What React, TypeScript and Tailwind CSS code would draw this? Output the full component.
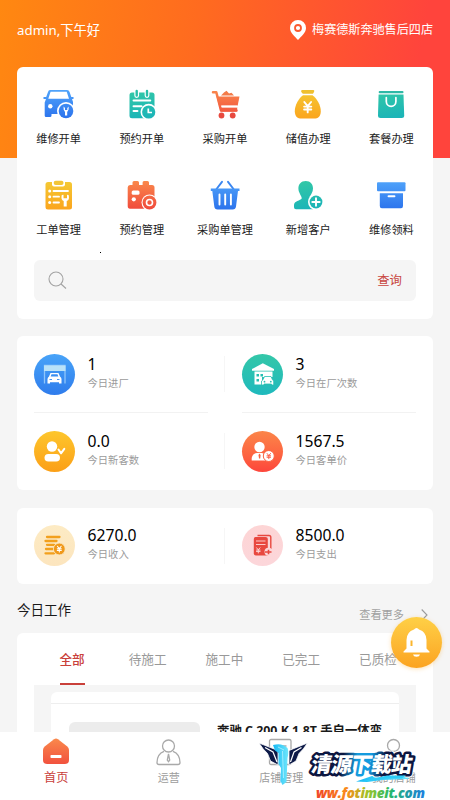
import { useState } from "react";
import type { ReactNode } from "react";

const Yen = ({ x, y, s = 1, color = "#fff" }: { x: number; y: number; s?: number; color?: string }) => (
  <g transform={`translate(${x} ${y}) scale(${s})`} stroke={color} strokeWidth="1.9" fill="none" strokeLinecap="round">
    <path d="M-3.4 -5 L0 -0.8 L3.4 -5 M0 -0.8 V5.4 M-3.6 -0.4 H3.6 M-3.6 2.5 H3.6" />
  </g>
);

const Gradients = () => (
  <svg width="0" height="0" className="absolute" aria-hidden="true">
    <defs>
      <linearGradient id="blue" x1="0" y1="0" x2="0" y2="30" gradientUnits="userSpaceOnUse">
        <stop stopColor="#51a5fb" />
        <stop offset="1" stopColor="#2b72ec" />
      </linearGradient>
      <linearGradient id="teal" x1="0" y1="0" x2="6" y2="30" gradientUnits="userSpaceOnUse">
        <stop stopColor="#35caa5" />
        <stop offset="1" stopColor="#1cb5b7" />
      </linearGradient>
      <linearGradient id="orange" x1="0" y1="0" x2="0" y2="30" gradientUnits="userSpaceOnUse">
        <stop stopColor="#fa8a4c" />
        <stop offset="1" stopColor="#f0493c" />
      </linearGradient>
      <linearGradient id="gold" x1="0" y1="0" x2="0" y2="30" gradientUnits="userSpaceOnUse">
        <stop stopColor="#f4cb35" />
        <stop offset="1" stopColor="#fba41d" />
      </linearGradient>
    </defs>
  </svg>
);

const actions: { label: string; icon: ReactNode }[] = [
  {
    label: "维修开单",
    icon: (
      <>
        <path
          fill="url(#blue)"
          fillRule="evenodd"
          d="M6 1H23Q25 1 25.6 3L27.3 8H29.5V10H28L29 13V25H7.5V26.5Q7.5 28 6 28H2Q.7 28 .7 26.5V13.5L2 10H-.5V8H2.2L4 3Q4.500 1 6 1ZM6.600 2.800L4.300 9.800H25L22.700 2.800Z"
        />
        <circle cx="6.300" cy="17.300" r="2.200" fill="#fff" />
        <circle cx="22" cy="22" r="9" fill="#fff" />
        <circle cx="22" cy="22" r="7.300" fill="url(#blue)" />
        <path d="M19.600 17.500V20.500L21 23V26.500H23.200V23L24.600 20.500V17.500L23.300 19V21H21V19Z" fill="#fff" />
      </>
    ),
  },
  {
    label: "预约开单",
    icon: (
      <>
        <rect x="2.500" y="3.500" width="25" height="25.800" rx="2.500" fill="url(#teal)" />
        <path d="M9.700 2.500V6.500M20 2.500V6.500" stroke="#fff" strokeWidth="4.800" strokeLinecap="round" />
        <path d="M9.700 2V6.500M20 2V6.500" stroke="#27bfa9" strokeWidth="2.400" strokeLinecap="round" />
        <path d="M6.500 11.500H23.300M6.500 17.300H14.500M6.500 22H10.500" stroke="#fff" strokeWidth="1.900" strokeLinecap="round" />
        <circle cx="21.700" cy="23" r="8.200" fill="#fff" />
        <circle cx="21.700" cy="23" r="6.600" fill="url(#teal)" />
        <path d="M21.300 19.500V23.500H25" stroke="#fff" strokeWidth="1.700" fill="none" />
      </>
    ),
  },
  {
    label: "采购开单",
    icon: (
      <>
        <path d="M3 3.300H6.300L11 21.500H26.500" stroke="url(#orange)" strokeWidth="2.500" fill="none" strokeLinecap="round" strokeLinejoin="round" />
        <path d="M6.500 7.500H29.500L27.700 16.500H9Z" fill="url(#orange)" />
        <path d="M11 6.500L14 3.500L16.500 1.700L19 4.500L21.500 3.700L24 6.500Z" fill="#f47b48" />
        <path d="M9.700 18.500H27.300L26.900 22.500H10.700Z" fill="url(#orange)" />
        <path d="M12 17.500H27" stroke="#fff" strokeWidth="1.600" />
        <circle cx="11.500" cy="26.500" r="2.900" fill="#e8493f" />
        <circle cx="22.700" cy="26.500" r="2.900" fill="#e8493f" />
      </>
    ),
  },
  {
    label: "储值办理",
    icon: (
      <>
        <path d="M9 1H20.500Q22 1.500 21 3L20 4.800H9.800L8.300 3Q7.500 1.500 9 1Z" fill="#efc02f" />
        <path d="M10 6.200H19.500C23.500 9 28 16 27.800 22.500C27.600 27.500 25 29.600 21 29.600H8.500C4.500 29.600 2 27.500 1.800 22.500C1.600 16 6 9 10 6.200Z" fill="url(#gold)" />
        <Yen x={14.7} y={18} />
      </>
    ),
  },
  {
    label: "套餐办理",
    icon: (
      <>
        <rect x="2.700" y="2" width="24.800" height="2.300" rx="1" fill="#2fb9a6" />
        <path d="M2.600 5.600H27.500L28.200 26.500Q28.200 29 25.700 29H4.500Q2 29 2 26.500Z" fill="url(#teal)" />
        <path d="M10.300 8.500V12.500A4.800 4.800 0 0 0 19.900 12.500V8.500" stroke="#fff" strokeWidth="1.700" fill="none" strokeLinecap="round" />
      </>
    ),
  },
  {
    label: "工单管理",
    icon: (
      <>
        <rect x="1.500" y="2" width="26.500" height="27.500" rx="2.500" fill="url(#gold)" />
        <path d="M8 1H21V4.500Q21 6.500 19 6.500H10Q8 6.500 8 4.500Z" fill="#fff" />
        <rect x="9.700" y=".7" width="9.800" height="4.400" rx="2" fill="#f2c536" />
        <g fill="#fff">
          <circle cx="5.700" cy="11" r="1.500" />
          <circle cx="5.700" cy="16.700" r="1.500" />
          <circle cx="5.700" cy="22.500" r="1.500" />
        </g>
        <path d="M9.500 11H24M9.500 16.700H15M9.500 22.500H15" stroke="#fff" strokeWidth="1.800" strokeLinecap="round" />
        <path d="M17.800 15Q16.500 19.800 19.700 21V26.500H22.700V21Q26 19.800 24.600 15L23 14.700V18.300H19.500V14.700Z" fill="#fff" />
      </>
    ),
  },
  {
    label: "预约管理",
    icon: (
      <>
        <path d="M3 5H5.500V2.500Q5.500 1 7 1H10.500Q12 1 12 2.500V5H15.600V2.500Q15.600 1 17 1H20.500Q22 1 22 2.500V5H25Q27.500 5 27.500 7.500V26Q27.500 28.700 25 28.700H3Q.7 28.700 .7 26V7.500Q.7 5 3 5Z" fill="url(#orange)" />
        <rect x="4.700" y="10.500" width="7.800" height="4.200" rx="1.500" fill="#fff" />
        <circle cx="6.800" cy="19.300" r="2.100" fill="#fff" />
        <circle cx="22.500" cy="22.500" r="8" fill="#fff" />
        <circle cx="22.500" cy="22.500" r="6.900" fill="url(#orange)" />
        <circle cx="22.500" cy="22.500" r="3" fill="none" stroke="#fff" strokeWidth="1.600" />
      </>
    ),
  },
  {
    label: "采购单管理",
    icon: (
      <>
        <path d="M6.500 9L12 1.800M23.500 9L18 1.800" stroke="#3a86f0" strokeWidth="1.900" strokeLinecap="round" />
        <path d="M.8 8.500H29.500V11H28L26 26.500Q25.600 29.500 22.700 29.500H7.600Q4.600 29.500 4.300 26.500L2.300 11H.8Z" fill="url(#blue)" />
        <path d="M9.500 14.500V24.500M15.200 14.500V24.500M20.900 14.500V24.500" stroke="#fff" strokeWidth="1.900" strokeLinecap="round" />
      </>
    ),
  },
  {
    label: "新增客户",
    icon: (
      <>
        <path d="M12.700 1C17.500 1 20 4.200 20 8.500C20 12 18 14.500 16.800 16.500C16.300 18.500 17 19.500 20 20.500V29.300H3Q1 29.300 1 27.300V25C1 21 7.500 20.500 8.700 18.500C9.200 16.500 5.400 13 5.400 8.500C5.400 4.200 8 1 12.700 1Z" fill="url(#teal)" />
        <circle cx="23" cy="22" r="8" fill="#fff" />
        <circle cx="23" cy="22" r="6.400" fill="url(#teal)" />
        <path d="M23 18.300V25.700M19.300 22H26.700" stroke="#fff" strokeWidth="1.900" strokeLinecap="round" />
      </>
    ),
  },
  {
    label: "维修领料",
    icon: (
      <>
        <rect x="1" y="2.300" width="28.500" height="9" rx="1" fill="url(#blue)" />
        <path d="M3.800 13.200H27V26Q27 28.200 25 28.200H5.800Q3.800 28.200 3.800 26Z" fill="url(#blue)" />
        <path d="M12.500 16.300H18.500" stroke="#fff" strokeWidth="1.900" strokeLinecap="round" />
      </>
    ),
  },
];

type StatItem = { value: string; label: string; bg: string; icon: ReactNode };

const visits: StatItem[] = [
  {
    value: "1",
    label: "今日进厂",
    bg: "bg-linear-to-b from-[#48a3f8] to-[#2f7cec]",
    icon: (
      <>
        <path d="M10.500 29.500V11.500H31V29.500" stroke="#8fc6fb" strokeWidth="1.300" fill="none" />
        <rect x="10" y="11.500" width="21.500" height="5.500" fill="#b9e2f8" />
        <path d="M16.500 19H24.500L26 22.500Q27.500 23.500 27.500 25V29.500H25V28.200H16V29.500H13.500V25Q13.500 23.500 15 22.500ZM17.500 20.300L16.700 22.500H24.300L23.500 20.300Z" fill="#fff" fillRule="evenodd" />
        <path d="M15.500 25.500H18M23 25.500H25.500" stroke="#4a97f2" strokeWidth="1.200" />
      </>
    ),
  },
  {
    value: "3",
    label: "今日在厂次数",
    bg: "bg-linear-to-b from-[#34c7a8] to-[#1eb9bd]",
    icon: (
      <>
        <path d="M10 16.700V15L20.800 9.300L32 15V16.700Z" fill="#fff" />
        <path d="M12.500 17.500H30.500V23H20V30.500H12.500Z" fill="#fff" />
        <path d="M14.500 20H17V22.500H14.500ZM18.500 20H21V22.500H18.500ZM14.500 25H17V27.500H14.500Z" fill="#27bfb2" />
        <path d="M22.500 22.500H29L30.500 25.700L31.700 27V31H29.500V30H22V31H19.500V27L21 25.700Z" fill="#fff" stroke="#27bfb2" strokeWidth=".8" />
        <circle cx="22.500" cy="27.700" r=".9" fill="#27bfb2" />
        <circle cx="28.800" cy="27.700" r=".9" fill="#27bfb2" />
      </>
    ),
  },
  {
    value: "0.0",
    label: "今日新客数",
    bg: "bg-linear-to-b from-[#fdc62c] to-[#fb9f16]",
    icon: (
      <>
        <circle cx="18" cy="15.500" r="5.200" fill="#fff" />
        <rect x="10.500" y="23" width="15.500" height="7.600" rx="3.800" fill="#fff" />
        <path d="M24.500 18.500L27 22.300L30.300 17.800" stroke="#fff" strokeWidth="2" fill="none" strokeLinecap="round" strokeLinejoin="round" />
      </>
    ),
  },
  {
    value: "1567.5",
    label: "今日客单价",
    bg: "bg-linear-to-b from-[#fb8549] to-[#fd453b]",
    icon: (
      <>
        <circle cx="17.500" cy="16" r="5.200" fill="#fff" />
        <path d="M9.700 29.500V27Q10.500 22.300 15 22H20Q23 22.300 24 25V29.500Z" fill="#fff" />
        <path d="M17.500 22.500L18.600 24L18.200 27.500H17L16.500 24Z" fill="#fb6140" />
        <circle cx="26.800" cy="25" r="5.500" fill="#fff" stroke="#fb6140" strokeWidth="1" />
        <Yen x={26.8} y={25} s={0.5} color="#fb5a40" />
      </>
    ),
  },
];

const money: StatItem[] = [
  {
    value: "6270.0",
    label: "今日收入",
    bg: "bg-linear-to-b from-[#fdebc4] to-[#fce5be]",
    icon: (
      <>
        <path d="M13 12H25.500M11.500 16H22.500M13 19.800H20M12 24H19M11.500 28.300H20" stroke="#f2a01d" strokeWidth="2.300" strokeLinecap="round" />
        <circle cx="25.300" cy="24" r="5.900" fill="#f0991a" stroke="#fce8c2" strokeWidth=".8" />
        <Yen x={25.3} y={24} s={0.55} />
      </>
    ),
  },
  {
    value: "8500.0",
    label: "今日支出",
    bg: "bg-linear-to-b from-[#fdd5d5] to-[#fcd6da]",
    icon: (
      <>
        <path d="M15.500 10.500H27Q28.800 10.500 28.800 12.300V24" stroke="#e8483f" strokeWidth="1.400" fill="none" />
        <path d="M13.500 12H23.500Q25.800 12 25.800 14V30.500H14Q11.800 30.500 11.800 28.500V14Q11.800 12 13.500 12Z" fill="#e8483f" />
        <path d="M14 16H23.500M14 19.500H23.500" stroke="#fbc9c9" strokeWidth="1.200" />
        <Yen x={16.3} y={25.3} s={0.5} color="#fbd5d5" />
        <circle cx="26.500" cy="26.800" r="4" fill="#fcd6d9" />
        <path d="M23 27H29.500M26.500 24.700V29.300" stroke="#e8483f" strokeWidth="1.600" />
      </>
    ),
  },
];

const Stat = ({ item }: { item: StatItem }) => (
  <div className="flex items-start">
    <div className={`h-[41px] w-[41px] shrink-0 rounded-full ${item.bg}`}>
      <svg width="41" height="41" viewBox="0 0 41 41">
        {item.icon}
      </svg>
    </div>
    <div className="ml-[12.5px] flex flex-col">
      <span className="h-5 text-[15.7px] leading-5 text-black">{item.value}</span>
      <span className="mt-0.5 text-[10.3px] leading-[14px] text-[#9b9b9b]">{item.label}</span>
    </div>
  </div>
);

const tabs = ["全部", "待施工", "施工中", "已完工", "已质检"];

const navItems: { label: string; icon: ReactNode }[] = [
  {
    label: "首页",
    icon: (
      <>
        <path d="M12 1.200Q14 -.3 16 1.200L25 8.200Q27 9.800 27 12V22Q27 26 23 26H5Q1 26 1 22V12Q1 9.800 3 8.200Z" fill="url(#orange)" />
        <rect x="8.500" y="17" width="11" height="3" rx=".8" fill="#fff" />
      </>
    ),
  },
  {
    label: "运营",
    icon: (
      <g fill="none" stroke="#a9a9a9" strokeWidth="1.300">
        <circle cx="13.500" cy="8" r="6" />
        <path d="M9 13.300Q2 16 2 24.500Q2 26.500 4 26.500H23Q25 26.500 25 24.500Q25 16 18 13.300" />
        <path d="M13.500 16L12.300 22L13.500 23.700L14.700 22L13.500 16Z" />
      </g>
    ),
  },
  {
    label: "店铺管理",
    icon: (
      <g fill="none" stroke="#a9a9a9" strokeWidth="1.300">
        <rect x="2.500" y="1.500" width="21.500" height="25" rx="1.500" />
        <path d="M7 8H19.500M7 14H16" />
      </g>
    ),
  },
  {
    label: "我的店铺",
    icon: (
      <g fill="none" stroke="#a9a9a9" strokeWidth="1.300">
        <circle cx="13.500" cy="7.500" r="6" />
        <path d="M9 13.300Q2 16 2 24.500Q2 26.500 4 26.500H23Q25 26.500 25 24.500Q25 16 18 13.300" />
      </g>
    ),
  },
];

const SiteBadge = () => (
  <div className="pointer-events-none absolute bottom-0 left-[255px] h-[62px] w-[180px] overflow-hidden">
    <svg width="180" height="62" viewBox="0 0 180 62">
      <defs>
        <linearGradient id="badgeEdge" x1="0" x2="1">
          <stop offset=".3" stopColor="#0c1640" />
          <stop offset=".44" stopColor="#159bdc" />
          <stop offset=".58" stopColor="#129ae0" />
          <stop offset=".72" stopColor="#0c1640" />
        </linearGradient>
        <linearGradient id="swoosh" x1="0" x2="1">
          <stop stopColor="#16b9f5" />
          <stop offset="1" stopColor="#6fe6fb" />
        </linearGradient>
        <linearGradient id="url" x1="0" x2="1">
          <stop stopColor="#f0442a" />
          <stop offset=".28" stopColor="#f98a1c" />
          <stop offset=".48" stopColor="#9cc52a" />
          <stop offset=".68" stopColor="#27b86a" />
          <stop offset="1" stopColor="#1d7ee0" />
        </linearGradient>
      </defs>
      <path d="M4 5L23 12.500V27L15.500 23L12.500 15.500Q8 11.500 4 5Z" fill="#0d1a48" stroke="#fff" strokeWidth=".8" />
      <path d="M52.500 5L34 12.500V27L41 23L44 15.500Q48.500 11.500 52.500 5Z" fill="#0d1a48" stroke="#fff" strokeWidth=".8" />
      <path d="M10 9.500L18 14L22 24M46.500 9.500L39 14L35.500 24" stroke="#fff" strokeWidth="1.200" fill="none" />
      <path d="M18 7Q27 4.500 32.500 10Q34 14 32.500 20L31.500 44L27.500 47L25.500 43L26 30L23.500 26V15L20 12.500Z" fill="url(#swoosh)" />
      <path d="M27.500 13L28.500 40M23 9L29 12" stroke="#b5f3ff" strokeWidth=".8" fill="none" />
      <path d="M101 43.500L117 38H150L158 27L153 41L128 42L112 44Z" fill="url(#swoosh)" />
      <g transform="translate(55 34) skewX(-10)" fontFamily="'Noto Sans CJK SC', sans-serif" fontWeight="900" fontSize="21">
        <text textLength="101" strokeWidth="7" stroke="#fff" fill="#fff" strokeLinejoin="round">清源下载站</text>
        <text textLength="101" strokeWidth="5" stroke="url(#badgeEdge)" fill="#0c1640" strokeLinejoin="round">清源下载站</text>
        <text textLength="101" fill="#fff">清源下载站</text>
      </g>
      <path d="M106 43.500L132 37.500H151L147 40.500Q128 39.500 114 43Z" fill="#2ccdf8" />
      <text x="61" y="59.500" textLength="109" fontFamily="'Open Sans', sans-serif" fontWeight="800" fontStyle="italic" fontSize="13.500" fill="url(#url)">
        ww.fotimeit.com
      </text>
    </svg>
  </div>
);

export default function App() {
  const [activeTab, setActiveTab] = useState(0);

  return (
    <div className="relative h-[800px] w-[450px] overflow-hidden bg-[#f5f5f5] font-['Noto_Sans','Noto_Sans_CJK_SC',sans-serif]">
      <Gradients />

      {/* Header */}
      <header className="flex h-[158px] items-start justify-between bg-linear-[100deg,#ff8811,#ff6b1f_42%,#ff443c_90%] px-[17px] pt-5 text-white">
        <span className="text-[13.3px] leading-[21px]">admin,下午好</span>
        <span className="flex items-center gap-1.5 text-[12.1px] leading-[20px]">
          <svg width="16" height="20" viewBox="0 0 16 20">
            <path d="M8 0A8 8 0 0 1 16 8C16 13 11 16.500 8 20C5 16.500 0 13 0 8A8 8 0 0 1 8 0Z" fill="#fff" />
            <circle cx="8" cy="8" r="3" fill="none" stroke="#fb5a30" strokeWidth="1.800" />
          </svg>
          梅赛德斯奔驰售后四店
        </span>
      </header>

      <main className="-mt-[91px] px-[17px]">
        {/* Quick actions */}
        <section className="relative h-[252px] rounded-md bg-white pt-[22px]">
          <div className="grid grid-cols-5">
            {actions.map((a) => (
              <button key={a.label} className="flex h-[91px] flex-col items-center">
                <svg width="30" height="30" viewBox="0 0 30 30" className="overflow-visible">
                  {a.icon}
                </svg>
                <span className="mt-3 text-[11.2px] leading-4 text-[#1c1c1c]">{a.label}</span>
              </button>
            ))}
          </div>
          <span className="absolute left-[83px] top-[185px] h-px w-px bg-black" />
          <div className="mx-[17px] -mt-[11px] flex h-[41px] items-center justify-between rounded-md bg-[#f5f5f5] px-[14px]">
            <svg width="19" height="19" viewBox="0 0 19 19" fill="none" stroke="#a3a3a3" strokeWidth="1.100">
              <circle cx="8" cy="8" r="7" />
              <path d="M13 13L18 17.500" />
            </svg>
            <span className="pt-0.5 text-[12.4px] text-[#c8463f]">查询</span>
          </div>
        </section>

        {/* Visits */}
        <section className="mt-[17px] grid h-[154px] grid-cols-2 grid-rows-[77px_77px] rounded-md bg-white">
          {visits.map((item) => (
            <div key={item.label} className="group relative pl-[17px] pt-[18px]">
              <Stat item={item} />
              <span className="absolute right-0 top-5 h-9 w-px bg-[#f6f6f6] group-even:hidden" />
              <span className="absolute bottom-0 left-[17px] h-px w-[174px] bg-[#f2f2f2] group-nth-[n+3]:hidden" />
            </div>
          ))}
        </section>

        {/* Income and spending */}
        <section className="mt-[18px] grid h-[76px] grid-cols-2 rounded-md bg-white">
          {money.map((item) => (
            <div key={item.label} className="group relative pl-[17px] pt-[17px]">
              <Stat item={item} />
              <span className="absolute right-0 top-5 h-9 w-px bg-[#f6f6f6] group-even:hidden" />
            </div>
          ))}
        </section>

        {/* Work of the day */}
        <div className="flex h-[49px] items-start justify-between pt-4">
          <h2 className="text-[13.500px] leading-5 text-[#1a1a1a]">今日工作</h2>
          <span className="mt-[5px] flex items-center gap-[17px] pr-[5px] text-[11.2px] leading-5 text-[#a0a0a0]">
            查看更多
            <svg width="7" height="12" viewBox="0 0 7 12" fill="none" stroke="#9a9a9a" strokeWidth="1.100">
              <path d="M.7 .5L6 6L.7 11.500" />
            </svg>
          </span>
        </div>
        <section className="h-[160px] rounded-t-md bg-white px-[17px]">
          <div className="flex h-[52px] gap-[39px] pl-[25.500px]">
            {tabs.map((t, i) => (
              <button
                key={t}
                onClick={() => setActiveTab(i)}
                className={`flex shrink-0 items-start whitespace-nowrap border-b-2 pt-[17px] text-[12.600px] leading-[19px] first:mr-[5px] ${
                  i === activeTab
                    ? "border-[#c9403a] font-medium text-[#c9403a]"
                    : "border-transparent text-[#999999]"
                }`}
              >
                {t}
              </button>
            ))}
          </div>
          <div className="bg-[#f5f5f5] px-[17px] pt-[7px]">
            <div className="h-[101px] rounded-t-md bg-white">
              <div className="h-3 border-b border-[#eeeeee]" />
              <div className="flex items-start gap-[17px] pl-[18px] pt-[18px]">
                <div className="h-20 w-[131px] rounded-t-md bg-[#ececec]" />
                <span className="whitespace-nowrap text-[12.400px] font-bold leading-[18px] text-[#1a1a1a]">奔驰 C 200 K 1.8T 手自一体变</span>
              </div>
            </div>
          </div>
        </section>
      </main>

      {/* Floating reminder */}
      <button className="absolute left-[391px] top-[617px] grid h-[51px] w-[51px] place-items-center rounded-full bg-linear-to-b from-[#fed046] to-[#fba31f] shadow-[0_1px_4px_rgba(250,170,40,0.35)]">
        <svg width="27" height="29" viewBox="0 0 27 29">
          <path d="M13.500 0Q15 0 16 1.500Q23.500 4 23.500 12V20.500L26.500 23.500V24.500H.5V23.500L3.500 20.500V12Q3.500 4 11 1.500Q12 0 13.500 0Z" fill="#fff" />
          <path d="M10 26.500H17Q16.500 28.800 13.500 28.800Q10.500 28.800 10 26.500Z" fill="#fff" />
          <path d="M8.500 12.500V18" stroke="#fbb52c" strokeWidth="2" />
        </svg>
      </button>

      {/* Bottom navigation */}
      <nav className="absolute inset-x-0 bottom-0 grid h-[68px] grid-cols-4 bg-white">
        {navItems.map((n, i) => (
          <button key={n.label} className="flex flex-col items-center pt-1.5">
            <svg width="28" height="28" viewBox="0 0 28 28">
              {n.icon}
            </svg>
            <span
              className={`mt-1 whitespace-nowrap leading-[15px] ${
                i === 0 ? "text-[12.200px] text-[#c9403a]" : "text-[11px] text-[#9c9c9c]"
              }`}
            >
              {n.label}
            </span>
          </button>
        ))}
      </nav>

      <SiteBadge />
    </div>
  );
}
